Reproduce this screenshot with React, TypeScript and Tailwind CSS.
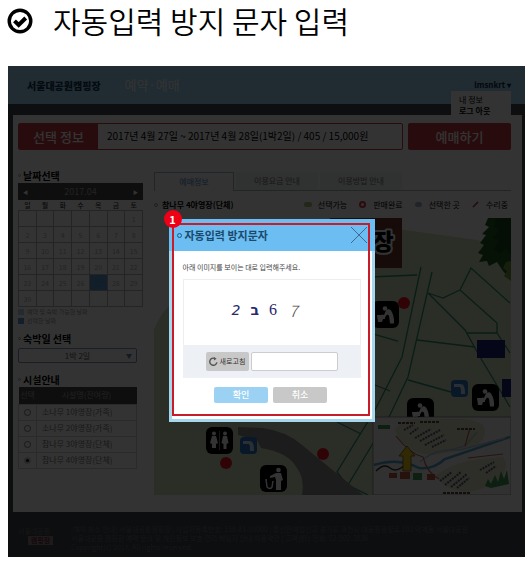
import React from "react";

const weekdays = ["일", "월", "화", "수", "목", "금", "토"];

const weeks: (number | null)[][] = [
  [null, null, null, null, null, null, 1],
  [2, 3, 4, 5, 6, 7, 8],
  [9, 10, 11, 12, 13, 14, 15],
  [16, 17, 18, 19, 20, 21, 22],
  [23, 24, 25, 26, 27, 28, 29],
  [30, null, null, null, null, null, null],
];

const facilities = [
  "소나무 1야영장(가족)",
  "소나무 2야영장(가족)",
  "참나무 3야영장(단체)",
  "참나무 4야영장(단체)",
];

function CheckBadge() {
  return (
    <svg viewBox="0 0 26 26" className="mt-[8px] size-[26px] shrink-0" aria-hidden="true">
      <circle cx="13" cy="13" r="10.8" fill="none" stroke="#000" strokeWidth="3.4" />
      <path d="M7.5 12.8l4.2 4.2 7-7" fill="none" stroke="#000" strokeWidth="4" />
    </svg>
  );
}

function SectionTitle({ children }: { children: React.ReactNode }) {
  return (
    <h3 className="flex h-[15px] items-center gap-[2px] text-[10px] font-bold leading-[15px] text-black">
      <span className="size-[3px] rounded-full border border-gray-400" />
      {children}
    </h3>
  );
}

function SiteHeader() {
  return (
    <header className="relative flex h-[38px] items-center bg-[#a0d7f8] pl-[19px] pr-[14px]">
      <a href="#home" className="text-[10px] font-black text-[#123a50]">서울대공원캠핑장</a>
      <span className="ml-[24px] text-[13px] font-normal text-white">예약·예매</span>
      <button className="ml-auto text-[8px] font-bold text-[#10283c]">lmsnkrt ▾</button>
      <div className="absolute right-[14px] top-[25px] flex h-[28px] w-[60px] flex-col justify-center bg-white pl-[8px] text-[8px] leading-[11px] text-black">
        <a href="#me">내 정보</a>
        <a href="#logout" className="font-bold">로그 아웃</a>
      </div>
    </header>
  );
}

function Calendar() {
  return (
    <div>
      <div className="flex h-[17px] items-center justify-between bg-[#484848] px-[5px] text-[8px] text-[#a8a8a8]">
        <button aria-label="이전 달" className="text-[5px] text-white">◀</button>
        <span className="text-[9px]">2017.04</span>
        <button aria-label="다음 달" className="text-[5px] text-white">▶</button>
      </div>
      <table className="w-full table-fixed border-collapse text-center text-[7px] leading-[10px]">
        <thead>
          <tr className="h-[10px]">
            {weekdays.map((d) => (
              <th key={d} className="p-0 font-medium text-[#333]">{d}</th>
            ))}
          </tr>
        </thead>
        <tbody>
          {weeks.map((week, i) => (
            <tr key={i} className="h-[16px]">
              {week.map((day, j) => (
                <td
                  key={j}
                  className={
                    day === 27
                      ? "border border-[#a8a8a8] bg-[#5a9cd8] p-0 text-[#4a88c0]"
                      : "border border-[#b4b4b4] p-0 text-[#b0b0b0]"
                  }
                >
                  {day}
                </td>
              ))}
            </tr>
          ))}
        </tbody>
      </table>
      <ul className="text-[6px] leading-[9px] text-[#999]">
        <li className="flex h-[9px] items-center gap-[3px]">
          <span className="size-[6px] bg-[#b4cfe6]" />예약 및 숙박 가능한 날짜
        </li>
        <li className="flex h-[9px] items-center gap-[3px]">
          <span className="size-[6px] bg-[#5a9cd8]" />선택한 날짜
        </li>
      </ul>
    </div>
  );
}

function FacilityTable() {
  return (
    <table className="w-[119px] border-collapse text-[8px]">
      <thead>
        <tr className="h-[17px] bg-[#484848] text-[#a0a0a0]">
          <th className="w-[18px] whitespace-nowrap p-0 font-normal">선택</th>
          <th className="p-0 font-normal">시설명(잔여량)</th>
        </tr>
      </thead>
      <tbody>
        {facilities.map((name, i) => (
          <tr key={name} className="h-[16px] border border-[#d0d0d0]">
            <td className="border-r border-[#d0d0d0] p-0 text-center">
              <input
                id={"facility-" + i}
                type="radio"
                name="facility"
                defaultChecked={i === 3}
                className="mx-auto block size-[7px] appearance-none rounded-full border border-[#777] bg-white checked:border-2 checked:border-[#ccc] checked:bg-black"
              />
            </td>
            <td className="py-0 pl-[5px] pr-0 text-[#777]">
              <label htmlFor={"facility-" + i}>{name}</label>
            </td>
          </tr>
        ))}
      </tbody>
    </table>
  );
}

function TapSign({ x, y }: { x: number; y: number }) {
  return (
    <g transform={`translate(${x} ${y})`}>
      <rect width="27" height="27" rx="6" fill="#000" />
      <circle cx="13" cy="7.500" r="2.300" fill="#fff" />
      <path d="M14 9.500q3-2.500 5 0 3.500 5 3 13h-4l-1-8-2-1-2 3-4-1 1-2 2 .5z" fill="#fff" />
      <path d="M5 14h6l2 2v2h-2l-1 3H6z" fill="#fff" />
    </g>
  );
}

function WaterSign({ x, y }: { x: number; y: number }) {
  return (
    <g transform={`translate(${x} ${y})`}>
      <rect width="17" height="17" rx="4" fill="#2c78c8" />
      <path d="M3 7V4h6c4 0 5 3 5 10h-4c0-5 0-7-2-7z" fill="#d8ecff" />
    </g>
  );
}

function CampMap() {
  return (
    <svg viewBox="154 218 357 277" className="block h-auto w-full" role="img" aria-label="야영장 지도">
      <rect x="154" y="218" width="357" height="277" fill="#fff" />
      <path d="M154 495V330q8-22 30-36L300 226h75l102 14 34 10v245z" fill="#d6dfc2" />
      <g fill="none" stroke="#2c9070" strokeWidth="1.300">
        <path d="M370 277l47-2M421 267l-19 90-27 53-38 62 11 14" />
        <path d="M432 272l-24 105-18 38-42 70 20 10" />
        <path d="M460 290l11-22 39 35M428 293l15 5 17-8 37 33v10h-30M428 293l37 37 15 27 30 50M497 333l13 20" />
        <path d="M370 333l28 8M417 340l58 7M408 380l43 12M370 383l20 8M337 422l24 12" />
      </g>
      <path d="M238 427l24 1q24 3 40 17l61 50h-61q3-16-5-27-9-16-36-20l-4-8-19-5z" fill="#8a8a8a" />
      <rect x="330" y="218" width="72" height="50" fill="#70382c" />
      <text x="383" y="250" textAnchor="middle" fontSize="23" fontWeight="900" fill="#000" stroke="#fff" strokeWidth="4" paintOrder="stroke" strokeLinejoin="round">장</text>
      <path d="M488 218l-3 7 4 2-7 7 4 1-6 8 4 2-6 8 5 2-4 7 8-1 2 5 8-4 6 9 8 9v-62z" fill="#245c20" />
      <path d="M496 218l-2 9 5 3-6 8 6 3-5 8 6 5 6-6 5 8v-38z" fill="#174815" />
      <path d="M506 262l-3 6 4 3-3 5 7 5v-20z" fill="#6d9d38" />
      <g fill="#20207c">
        <rect x="477" y="340" width="28" height="18" />
        <rect x="502" y="379" width="9" height="18" />
      </g>
      <TapSign x={372} y={301} />
      <TapSign x={407} y={398} />
      <TapSign x={472} y={384} />
      <WaterSign x={451} y={380} />
      <WaterSign x={240} y={437} />
      <g fill="#f01824">
        <circle cx="404" cy="303" r="6" />
        <circle cx="226" cy="463" r="6" />
        <circle cx="323" cy="454" r="6" />
      </g>
      <g>
        <rect x="206" y="427" width="27" height="27" rx="6" fill="#000" />
        <path d="M219.500 431v19" stroke="#777" />
        <g fill="#fff">
          <circle cx="214" cy="433.500" r="2" />
          <path d="M212 436h4l2 7-2 1v4h-4v-4l-2-1z" />
          <circle cx="225" cy="433.500" r="2" />
          <path d="M223 436h4l1.500 7-2 1v5h-3v-5l-2-1z" />
        </g>
      </g>
      <g>
        <rect x="260" y="465" width="27" height="27" rx="6" fill="#000" />
        <circle cx="278.500" cy="470" r="2.300" fill="#fff" />
        <path d="M276 473h5l2 7-2 1v9h-5v-10l-1-3-5 1v-2z" fill="#fff" />
        <path d="M266 479l1 8q3 3 5 0l1-6" fill="none" stroke="#fff" strokeWidth="1.500" />
      </g>
      <rect x="373" y="417" width="138" height="78" fill="#f2f4f2" stroke="#777" strokeWidth=".7" />
      <path d="M395 430q5-11 25-11h45q22 3 20 14-3 13-22 17l-30 5q-30-2-38-25z" fill="#dde3c4" />
      <path d="M436 475q20-14 45-16l22-2q6 6 0 18-13 14-35 17-25-2-32-17z" fill="#dde3c4" />
      <path d="M374 465q25-8 45 3 14 2 26-9l65-22" fill="none" stroke="#58a4cc" strokeWidth="2.500" />
      <path d="M420 462q15-14 40-12l45-12M445 451l20-5 12-14" fill="none" stroke="#b4c8d8" strokeWidth="1.500" />
      <path d="M396 436q14 18 27 21 4 16 16 22M465 446l5-18M468 458l35-4" fill="none" stroke="#c86058" strokeWidth="1.200" />
      <g fill="none" stroke="#55557c" strokeWidth="2" strokeDasharray="2 1">
        <path d="M404 430l9-5M410 434l8-6M415 438l16-9M420 441l20-11M425 445l19-10M432 447l14-7" />
        <path d="M440 481l12-9M445 485l16-13M451 487l16-13M457 488l12-10M480 470l14-8M486 473l10-7" />
      </g>
      <g fill="none" stroke="#604830" strokeWidth="2" strokeDasharray="3 1">
        <path d="M398 423h17M420 422h20M457 429h18M443 493h28" />
      </g>
      <path d="M376 471q8-8 14-3t15-3" fill="none" stroke="#333" strokeWidth="1.500" />
      <g fill="#bc5440">
        <rect x="389" y="473" width="8" height="5" />
        <rect x="400" y="472" width="10" height="7" />
        <rect x="427" y="474" width="8" height="6" />
      </g>
      <g fill="#3c9c54">
        <rect x="413" y="473" width="9" height="7" />
        <rect x="378" y="425" width="12" height="4" />
        <path d="M485 486l3-7 3 5 4-9 3 7 3-11 3 8 3-9 2 14-18 4z" />
      </g>
      <path d="M407 446l8 10h-4v15h-8v-15h-4z" fill="#f4cc10" stroke="#705010" strokeWidth=".8" />
    </svg>
  );
}

function CaptchaDialog() {
  return (
    <section
      role="dialog"
      aria-label="자동입력 방지문자"
      className="relative h-[203px] w-[206px] border-x-[3px] border-b-[3px] border-[#a5d8ef] bg-white"
    >
      <header className="-mx-[3px] flex h-[32px] items-center bg-[#6bbdf2] px-[8px]">
        <span className="mr-[3px] size-[5px] rounded-full border border-[#1c5a86]" />
        <h2 className="text-[11px] font-bold leading-[20px] text-[#1c4a6c]">자동입력 방지문자</h2>
        <button aria-label="닫기" className="ml-auto">
          <svg viewBox="0 0 16 16" className="size-[16px]" stroke="#3d6b90" strokeWidth="1">
            <path d="M0 0l16 16M16 0L0 16" />
          </svg>
        </button>
      </header>
      <div className="px-[11px] pt-[8px]">
        <p className="h-[20px] text-[7px] leading-[16px] text-[#444]">아래 이미지를 보이는 대로 입력해주세요.</p>
        <div className="flex h-[66px] items-center justify-center gap-[10px] border border-b-0 border-[#eeeeee] pb-[6px] pr-[14px] text-[16px] leading-none text-[#28286c]">
          <em className="font-[DejaVu_Sans] text-[14px] font-medium">2</em>
          <span className="font-[DejaVu_Sans] text-[14px] font-bold">ב</span>
          <span className="font-[Liberation_Serif]">6</span>
          <em className="pl-[2px] text-[16px] font-light text-[#444]">7</em>
        </div>
        <div className="flex h-[33px] items-center justify-center gap-[2px] bg-[#edf1f5]">
          <button className="flex h-[19px] w-[43px] items-center justify-center gap-[2px] rounded-[2px] bg-[#c8c8c8] text-[7px] text-[#333]">
            <svg viewBox="0 0 10 10" className="size-[9px]" fill="none" stroke="#555" strokeWidth="1.600">
              <path d="M8.800 6a4 4 0 1 1-2.500-4.500" />
              <path d="M5.500 0l3 2-3 2z" fill="#555" stroke="none" />
            </svg>
            새로고침
          </button>
          <input
            aria-label="자동입력 방지문자"
            className="h-[19px] w-[87px] rounded-[2px] border border-[#ccc] bg-white px-1 text-[9px]"
          />
        </div>
        <div className="mr-[2px] mt-[9px] flex justify-center gap-[5px] text-[9px] font-medium text-white">
          <button className="h-[16px] w-[54px] rounded-[2px] bg-[#9bd1f3]">확인</button>
          <button className="h-[16px] w-[54px] rounded-[2px] bg-[#c8c8c8]">취소</button>
        </div>
      </div>
      <div className="pointer-events-none absolute bottom-[3px] left-0 right-[2px] top-[4px] border-2 border-[#c81c28]" />
      <span className="absolute -left-[8px] -top-[9px] flex size-[18px] items-center justify-center rounded-full bg-[#f00014] text-[11px] font-bold text-white">
        1
      </span>
    </section>
  );
}

export default function App() {
  return (
    <main className="min-h-screen bg-white pb-[7px] pl-2 pr-[6px] font-['Noto_Sans_CJK_KR',sans-serif]">
      <div className="-ml-px flex h-[66px] items-start gap-[20px]">
        <CheckBadge />
        <h1 className="whitespace-nowrap text-[30px] font-[350] leading-[40px] text-black">
          자동입력 방지 문자 입력
        </h1>
      </div>

      <div className="relative bg-[#40474c]">
        <SiteHeader />
        <div className="ml-[5px] mr-[3px] mt-[11px] bg-white pb-[17px] pl-[5px] pr-[11px] pt-[8px]">
          <div className="flex h-[27px] gap-[5px]">
            <div className="flex flex-1 overflow-hidden rounded-[2px] border border-[#c83840]">
              <strong className="flex w-[79px] items-center justify-center bg-[#c83840] text-[13px] font-medium text-white">
                선택 정보
              </strong>
              <p className="whitespace-nowrap pl-[9px] text-[10px] leading-[24px] text-black">
                2017년 4월 27일 ~ 2017년 4월 28일(1박2일) / 405 / 15,000원
              </p>
            </div>
            <button className="w-[103px] rounded-[2px] bg-[#c83840] text-[13px] font-medium text-white">예매하기</button>
          </div>

          <div className="mt-[18px] flex gap-[11px]">
            <aside className="w-[125px] shrink-0">
              <SectionTitle>날짜선택</SectionTitle>
              <Calendar />
              <div className="mt-[6px]">
                <SectionTitle>숙박일 선택</SectionTitle>
              </div>
              <div className="relative mt-[2px] w-[119px]">
                <select
                  aria-label="숙박일 선택"
                  className="block h-[15px] w-full appearance-none rounded-[2px] border border-[#7c90b8] bg-white text-center text-[8px] leading-[12px] text-[#555]"
                >
                  <option>1박 2일</option>
                </select>
                <span className="pointer-events-none absolute right-[5px] top-[3px] text-[6px] leading-[9px] text-[#6080a8]">▼</span>
              </div>
              <div className="mt-[9px]">
                <SectionTitle>시설안내</SectionTitle>
              </div>
              <FacilityTable />
            </aside>

            <section className="min-w-0 flex-1 pt-[4px]">
              <nav className="flex h-[19px] border-b border-[#a8b8bc] text-[8px] text-[#777]">
                <button className="-mb-px w-[80px] border border-b-0 border-[#9cb8cc] bg-white text-[#4a8cc4]">예매정보</button>
                <button className="ml-[2px] w-[82px] bg-[#eef2f2]">이용요금 안내</button>
                <button className="ml-[2px] w-[82px] bg-[#eef2f2]">이용방법 안내</button>
              </nav>
              <div className="flex h-[27px] items-center justify-between">
                <h3 className="flex items-center gap-[4px] text-[8px] font-bold">
                  <span className="size-[4px] rounded-full border border-gray-400" />
                  참나무 4야영장(단체)
                </h3>
                <ul className="flex gap-[12px] pr-[3px] text-[8px] text-black">
                  <li className="flex items-center gap-[6px]">
                    <span className="h-[5px] w-[8px] rounded-full bg-[#b4bc70]" />선택가능
                  </li>
                  <li className="flex items-center gap-[7px]">
                    <span className="size-[7px] rounded-full border-2 border-[#d83848] bg-white" />판매완료
                  </li>
                  <li className="flex items-center gap-[7px]">
                    <span className="h-[5px] w-[7px] rounded-full bg-[#a8b0c8]" />선택한 곳
                  </li>
                  <li className="flex items-center gap-[7px]">
                    <svg viewBox="0 0 8 8" className="size-[7px]">
                      <path d="M1 7l4-4 2-2" stroke="#c84858" strokeWidth="2" />
                    </svg>
                    수리중
                  </li>
                </ul>
              </div>
              <CampMap />
            </section>
          </div>
        </div>

        <footer className="flex h-[45px] items-start gap-[18px] overflow-hidden pl-[10px] pt-[13px] text-[7px] leading-[9px] text-[#6c6c74]">
          <div className="w-[35px] pt-[2px]">
            <p>서울대공원</p>
            <p className="ml-[10px] bg-[#98848c] text-center font-bold text-[#602c38]">캠핑장</p>
          </div>
          <div className="min-w-0 flex-1 whitespace-nowrap">
            <p>[예약 취소 안내] 서울대공원캠핑장 | 사업자등록번호: 138-81-00000 | 통신판매업신고 경기도 과천시 대공원광장로 102 막계동 서울대공원</p>
            <p>서울대공원 캠핑장 예약 문의 및 개인정보 보호 관리 책임자 안내 이용약관 | 고객센터 전화: 02-502-3836</p>
            <p>Copyright(c) 2017. All rights reserved.</p>
          </div>
        </footer>

        <div className="absolute inset-0 flex items-start justify-center bg-black/80 pl-[10px] pt-[153px]">
          <CaptchaDialog />
        </div>
      </div>
    </main>
  );
}
